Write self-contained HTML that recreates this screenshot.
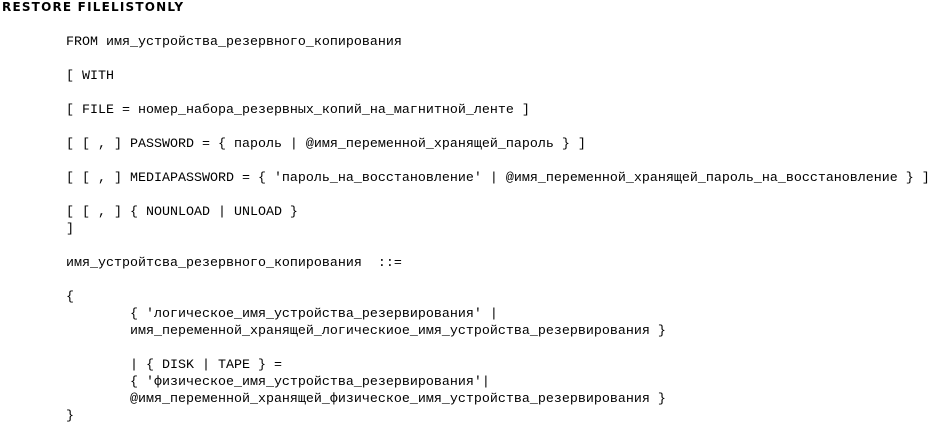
<!DOCTYPE html>
<html><head><meta charset="utf-8"><style>
html,body{margin:0;padding:0;background:#fff;width:931px;height:425px;overflow:hidden}
pre{margin:0;position:absolute;left:2px;top:-1px;font-family:"Liberation Mono","DejaVu Sans Mono",monospace;font-size:13.33px;line-height:17px;color:#000}
.t{font-family:"DejaVu Sans","Liberation Sans",sans-serif;font-weight:bold;font-size:12px;letter-spacing:1.2px}
</style></head><body>
<pre><span class="t">RESTORE FILELISTONLY</span>

        FROM имя_устройства_резервного_копирования

        [ WITH

        [ FILE = номер_набора_резервных_копий_на_магнитной_ленте ]

        [ [ , ] PASSWORD = { пароль | @имя_переменной_хранящей_пароль } ]

        [ [ , ] MEDIAPASSWORD = { 'пароль_на_восстановление' | @имя_переменной_хранящей_пароль_на_восстановление } ]

        [ [ , ] { NOUNLOAD | UNLOAD }
        ]

        имя_устройтсва_резервного_копирования  ::=

        {
                { 'логическое_имя_устройства_резервирования' |
                имя_переменной_хранящей_логическиое_имя_устройства_резервирования }

                | { DISK | TAPE } =
                { 'физическое_имя_устройства_резервирования'|
                @имя_переменной_хранящей_физическое_имя_устройства_резервирования }
        }</pre>
</body></html>
